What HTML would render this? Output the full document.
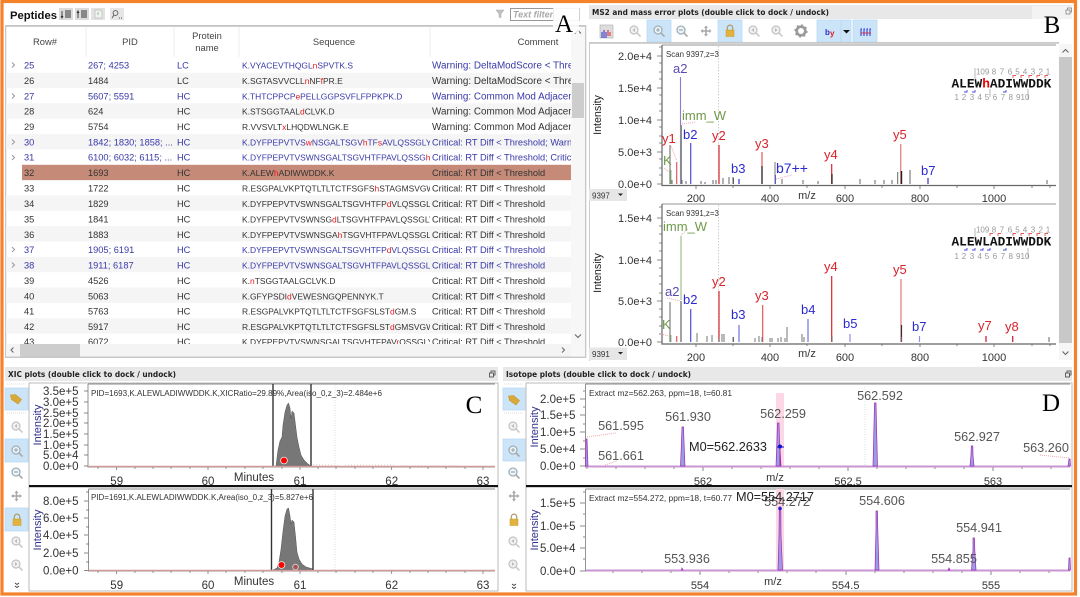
<!DOCTYPE html>
<html><head><meta charset="utf-8">
<style>
html,body{margin:0;padding:0;background:#fff;width:1080px;height:597px;overflow:hidden}
svg{display:block}
text{font-family:"Liberation Sans",sans-serif;white-space:pre}
.c{font-size:9.25px;fill:#333}
.w{font-size:9.9px}
.s{font-size:8.45px;fill:#333}
.b{fill:#3838a8}
.r{fill:#e8191c}
.h{font-size:9.4px;fill:#444;text-anchor:middle}
.t{font-family:"DejaVu Sans",sans-serif;font-size:8px;font-weight:bold;fill:#222}
.yl{font-size:11px;fill:#333;text-anchor:end}
.yc{font-size:11.5px;fill:#333;text-anchor:end}
.xl{font-size:11px;fill:#333;text-anchor:middle}
.xc{font-size:11.5px;fill:#333;text-anchor:middle}
.li{font-size:13px}
.lr{fill:#d8232a}.lb{fill:#2a2ad0}.lg{fill:#6f9a4a}.lp{fill:#5a4ab0}
.iso{font-size:12.7px;fill:#555;text-anchor:middle}
.sm{font-size:7.9px;fill:#333}
.n{font-size:8px;fill:#999}
.let{font-family:"Liberation Serif",serif;font-size:25px;fill:#000;text-anchor:middle}
.seq{font-family:"Liberation Mono",monospace;font-size:12.8px;font-weight:bold;fill:#111}
.btn{fill:#cce4f7;stroke:#b4d8f5;stroke-width:.7}
.pk{fill:#9b9ce6;stroke:#a02ab0;stroke-width:.7}
</style></head><body>
<svg width="1080" height="597" viewBox="0 0 1080 597" xmlns="http://www.w3.org/2000/svg">
<defs>
<clipPath id="cs"><rect x="240" y="57" width="190" height="287"/></clipPath>
<clipPath id="cc"><rect x="431" y="57" width="140" height="287"/></clipPath>
<clipPath id="ct"><rect x="6" y="57" width="565" height="287"/></clipPath>
<g id="zoom"><circle cx="-1" cy="-1" r="4" fill="#eef3f6" stroke="#9fb0bb" stroke-width="1.3"/><path d="M2 2l3.5 3.5" stroke="#aaa" stroke-width="1.6"/></g>
<g id="zin"><use href="#zoom"/><path d="M-3-1h4M-1-3v4" stroke="#7d929f" stroke-width=".8"/></g>
<g id="zout"><use href="#zoom"/><path d="M-3-1h4" stroke="#7d929f" stroke-width=".9"/></g>
<g id="zar"><circle cx="-1" cy="-1" r="4" fill="#f1f1f1" stroke="#c2c2c2" stroke-width="1.2"/><path d="M2 2l3.5 3.5" stroke="#ccc" stroke-width="1.6"/><path d="M-2.5-1l2.5-2v4z" fill="#bbb"/></g>
<g id="zar2"><circle cx="-1" cy="-1" r="4" fill="#f1f1f1" stroke="#c2c2c2" stroke-width="1.2"/><path d="M2 2l3.5 3.5" stroke="#ccc" stroke-width="1.6"/><path d="M.5-1l-2.5-2v4z" fill="#bbb"/></g>
<g id="move"><path d="M0-5.5l2 2.5h-1.2v2.2h2.2V-2L5.5 0 3 2V.8H.8V3H2L0 5.5-2 3h1.2V.8H-3V2L-5.5 0-3-2v1.2h2.2V-3H-2z" fill="#a8a8a8"/></g>
<g id="lock"><path d="M-2.7-1v-2.2a2.7 2.7 0 015.4 0V-1" fill="none" stroke="#a99a70" stroke-width="1.2"/><rect x="-4" y="-1" width="8" height="6.5" fill="#e2b23c" stroke="#c79b2a" stroke-width=".5"/></g>
<g id="tag"><path d="M-5.5-4l5-.5 6 5-3.500 4.500-6.500-4.500z" fill="#d9a93a" stroke="#c4952a" stroke-width=".6"/></g>
<g id="arrup"><path d="M-3 1.500L0-1.500l3 3" fill="none" stroke="#666" stroke-width="1.1"/></g>
<g id="arrdn"><path d="M-3-1.500L0 1.500l3-3" fill="none" stroke="#666" stroke-width="1.1"/></g>
</defs>

<rect width="1080" height="597" fill="#fff"/>

<!-- PEPTIDES PANEL -->
<text x="10" y="19" textLength="47" lengthAdjust="spacingAndGlyphs" style="font-size:11px;font-weight:bold;fill:#111">Peptides</text>
<rect x="59" y="8" width="14" height="12" fill="#dcdcdc"/><path d="M62 11v7M61 16l1 2 1-2M65 11h6M65 13h6M65 15h6M65 17h6" stroke="#333" stroke-width=".9" fill="none"/>
<rect x="75" y="8" width="14" height="12" fill="#dcdcdc"/><path d="M78 11v7M77 13l1-2 1 2M81 11h6M81 13h6M81 15h6M81 17h6" stroke="#333" stroke-width=".9" fill="none"/>
<rect x="91" y="8" width="14" height="12" fill="#e2e2e2"/><path d="M95 10h6l1 2v6h-7z" fill="#f2f2f2" stroke="#bbb" stroke-width=".7"/><path d="M98 12v3" stroke="#9c9" stroke-width="1.2"/>
<rect x="110" y="8" width="14" height="12" fill="#e6e6e6"/><circle cx="115.500" cy="13" r="2.400" fill="none" stroke="#555" stroke-width=".9"/><path d="M114 15l-2 3M119 18h1M121 18h1" stroke="#555" stroke-width=".9"/>
<path d="M496 10h8l-3 4v4l-2-1v-3z" fill="#c2c2c2" stroke="#aaa" stroke-width=".5"/>
<rect x="510.500" y="8.500" width="69" height="12" fill="#fff" stroke="#d0d0d0"/>
<rect x="510.500" y="8.500" width="43" height="12" fill="none" stroke="#999"/>
<text x="513" y="17.500" style="font-size:9px;font-style:italic;font-weight:bold;fill:#a8a8a8">Text filter</text>

<rect x="5" y="25" width="581" height="1.800" fill="#c4c4c4"/>
<rect x="5" y="25" width="1.300" height="333" fill="#c8c8c8"/>
<rect x="5" y="356.500" width="581" height="1.500" fill="#c8c8c8"/>
<rect x="585" y="25" width="1.300" height="333" fill="#c8c8c8"/>
<path d="M86 27v30M174 27v30M239 27v30M430 27v30" stroke="#eee"/>
<text class="h" x="45" y="45">Row#</text>
<text class="h" x="130" y="45">PID</text>
<text class="h" x="207" y="39">Protein</text>
<text class="h" x="207" y="51">name</text>
<text class="h" x="334" y="45">Sequence</text>
<text class="h" x="538" y="45">Comment</text>

<!-- row backgrounds -->
<g fill="#f5f5f5">
<rect x="6" y="72.650" width="565" height="15.350"/><rect x="6" y="103.350" width="565" height="15.350"/><rect x="6" y="134.050" width="565" height="15.350"/>
<rect x="6" y="195.450" width="565" height="15.350"/><rect x="6" y="226.150" width="565" height="15.350"/><rect x="6" y="256.850" width="565" height="15.350"/>
<rect x="6" y="287.550" width="565" height="15.350"/><rect x="6" y="318.250" width="565" height="15.350"/>
</g>
<rect x="22" y="164.800" width="549" height="15.350" fill="#c58a78"/>

<g clip-path="url(#ct)">
<text class="c b" x="24" y="68.500">25</text><text class="c b" x="88" y="68.500">267; 4253</text><text class="c b" x="177" y="68.500">LC</text>
<text class="c" x="24" y="84">26</text><text class="c" x="88" y="84">1484</text><text class="c" x="177" y="84">LC</text>
<text class="c b" x="24" y="99.500">27</text><text class="c b" x="88" y="99.500">5607; 5591</text><text class="c b" x="177" y="99.500">HC</text>
<text class="c" x="24" y="114.500">28</text><text class="c" x="88" y="114.500">624</text><text class="c" x="177" y="114.500">HC</text>
<text class="c" x="24" y="130">29</text><text class="c" x="88" y="130">5754</text><text class="c" x="177" y="130">HC</text>
<text class="c b" x="24" y="145.500">30</text><text class="c b" x="88" y="145.500">1842; 1830; 1858; ...</text><text class="c b" x="177" y="145.500">HC</text>
<text class="c b" x="24" y="160.500">31</text><text class="c b" x="88" y="160.500">6100; 6032; 6115; ...</text><text class="c b" x="177" y="160.500">HC</text>
<text class="c" x="24" y="176">32</text><text class="c" x="88" y="176">1693</text><text class="c" x="177" y="176">HC</text>
<text class="c" x="24" y="191.500">33</text><text class="c" x="88" y="191.500">1722</text><text class="c" x="177" y="191.500">HC</text>
<text class="c" x="24" y="207">34</text><text class="c" x="88" y="207">1829</text><text class="c" x="177" y="207">HC</text>
<text class="c" x="24" y="222.500">35</text><text class="c" x="88" y="222.500">1841</text><text class="c" x="177" y="222.500">HC</text>
<text class="c" x="24" y="238">36</text><text class="c" x="88" y="238">1883</text><text class="c" x="177" y="238">HC</text>
<text class="c b" x="24" y="253">37</text><text class="c b" x="88" y="253">1905; 6191</text><text class="c b" x="177" y="253">HC</text>
<text class="c b" x="24" y="268.500">38</text><text class="c b" x="88" y="268.500">1911; 6187</text><text class="c b" x="177" y="268.500">HC</text>
<text class="c" x="24" y="284">39</text><text class="c" x="88" y="284">4526</text><text class="c" x="177" y="284">HC</text>
<text class="c" x="24" y="299.500">40</text><text class="c" x="88" y="299.500">5063</text><text class="c" x="177" y="299.500">HC</text>
<text class="c" x="24" y="314.500">41</text><text class="c" x="88" y="314.500">5763</text><text class="c" x="177" y="314.500">HC</text>
<text class="c" x="24" y="330">42</text><text class="c" x="88" y="330">5917</text><text class="c" x="177" y="330">HC</text>
<text class="c" x="24" y="345">43</text><text class="c" x="88" y="345">6072</text><text class="c" x="177" y="345">HC</text>
<g clip-path="url(#cs)">
<text class="s b" x="242" y="68.500">K.VYACEVTHQGL<tspan class="r">n</tspan>SPVTK.S</text>
<text class="s" x="242" y="84">K.SGTASVVCLL<tspan class="r">n</tspan>NF<tspan class="r">f</tspan>PR.E</text>
<text class="s b" x="242" y="99.500">K.THTCPPCP<tspan class="r">e</tspan>PELLGGPSVFLFPPKPK.D</text>
<text class="s" x="242" y="114.500">K.STSGGTAAL<tspan class="r">d</tspan>CLVK.D</text>
<text class="s" x="242" y="130">R.VVSVLT<tspan class="r">x</tspan>LHQDWLNGK.E</text>
<text class="s b" x="242" y="145.500">K.DYFPEPVTVS<tspan class="r">w</tspan>NSGALTSGV<tspan class="r">h</tspan>TF<tspan class="r">s</tspan>AVLQSSGLY</text>
<text class="s b" x="242" y="160.500">K.DYFPEPVTVSWNSGALTSGVHTFPAVLQSSG<tspan class="r">h</tspan></text>
<text class="s" x="242" y="176">K.ALEW<tspan class="r">h</tspan>ADIWWDDK.K</text>
<text class="s" x="242" y="191.500">R.ESGPALVKPTQTLTLTCTFSGFS<tspan class="r">h</tspan>STAGMSVGW</text>
<text class="s" x="242" y="207">K.DYFPEPVTVSWNSGALTSGVHTFP<tspan class="r">d</tspan>VLQSSGL</text>
<text class="s" x="242" y="222.500">K.DYFPEPVTVSWNSG<tspan class="r">d</tspan>LTSGVHTFPAVLQSSGLY</text>
<text class="s" x="242" y="238">K.DYFPEPVTVSWNSGA<tspan class="r">h</tspan>TSGVHTFPAVLQSSGL</text>
<text class="s b" x="242" y="253">K.DYFPEPVTVSWNSGALTSGVHTFP<tspan class="r">d</tspan>VLQSSGL</text>
<text class="s b" x="242" y="268.500">K.DYFPEPVTVSWNSGALTSGVHTFPAVLQSSGLY</text>
<text class="s" x="242" y="284">K.<tspan class="r">n</tspan>TSGGTAALGCLVK.D</text>
<text class="s" x="242" y="299.500">K.GFYPSDI<tspan class="r">d</tspan>VEWESNGQPENNYK.T</text>
<text class="s" x="242" y="314.500">R.ESGPALVKPTQTLTLTCTFSGFSLST<tspan class="r">d</tspan>GM.S</text>
<text class="s" x="242" y="330">R.ESGPALVKPTQTLTLTCTFSGFSLST<tspan class="r">d</tspan>GMSVGW</text>
<text class="s" x="242" y="345">K.DYFPEPVTVSWNSGALTSGVHTFPAV<tspan class="r">r</tspan>QSSGLY</text>
</g>
<g clip-path="url(#cc)">
<text class="c b w" x="432" y="68.500">Warning: DeltaModScore &lt; Threshold</text>
<text class="c w" x="432" y="84">Warning: DeltaModScore &lt; Threshold</text>
<text class="c b w" x="432" y="99.500">Warning: Common Mod Adjacent</text>
<text class="c w" x="432" y="114.500">Warning: Common Mod Adjacent</text>
<text class="c w" x="432" y="130">Warning: Common Mod Adjacent</text>
<text class="c b" x="432" y="145.500">Critical: RT Diff &lt; Threshold; Warning</text>
<text class="c b" x="432" y="160.500">Critical: RT Diff &lt; Threshold; Critical</text>
<text class="c" x="432" y="176">Critical: RT Diff &lt; Threshold</text>
<text class="c" x="432" y="191.500">Critical: RT Diff &lt; Threshold</text>
<text class="c" x="432" y="207">Critical: RT Diff &lt; Threshold</text>
<text class="c" x="432" y="222.500">Critical: RT Diff &lt; Threshold</text>
<text class="c" x="432" y="238">Critical: RT Diff &lt; Threshold</text>
<text class="c b" x="432" y="253">Critical: RT Diff &lt; Threshold</text>
<text class="c b" x="432" y="268.500">Critical: RT Diff &lt; Threshold</text>
<text class="c" x="432" y="284">Critical: RT Diff &lt; Threshold</text>
<text class="c" x="432" y="299.500">Critical: RT Diff &lt; Threshold</text>
<text class="c" x="432" y="314.500">Critical: RT Diff &lt; Threshold</text>
<text class="c" x="432" y="330">Critical: RT Diff &lt; Threshold</text>
<text class="c" x="432" y="345">Critical: RT Diff &lt; Threshold</text>
</g>
</g>
<!-- expanders -->
<path d="M12 62.500l2.500 2.500-2.500 2.500M12 93.500l2.500 2.500-2.500 2.500M12 139.500l2.500 2.500-2.500 2.500M12 155l2.500 2.500-2.500 2.500M12 247l2.500 2.500-2.500 2.500M12 262.500l2.500 2.500-2.500 2.500" fill="none" stroke="#999" stroke-width="1"/>
<!-- table scrollbars -->
<rect x="571" y="27" width="14" height="329" fill="#f7f7f7"/>
<rect x="572" y="83" width="12" height="35" fill="#cdcdcd"/>
<use href="#arrup" x="578" y="32"/>
<use href="#arrdn" x="578" y="336"/>
<rect x="6" y="344" width="565" height="12.500" fill="#f4f4f4"/>
<rect x="20" y="344" width="60" height="12.500" fill="#cdcdcd"/>
<path d="M13.500 347.500l-2.500 2.500 2.500 2.500M562 347.500l2.500 2.500-2.500 2.500" fill="none" stroke="#666"/>

<rect x="553" y="7" width="26" height="26" fill="#fff" opacity=".8"/>
<text class="let" x="564" y="32">A</text>

<!-- MS2 PANEL -->
<rect x="589" y="5" width="483" height="14" fill="#e8e8e8"/>
<rect x="1032" y="6" width="40" height="13" fill="#f3f3f3"/>
<text class="t" x="592" y="15" textLength="237" lengthAdjust="spacingAndGlyphs">MS2 and mass error plots (double click to dock / undock)</text>
<rect x="1067.500" y="8" width="4" height="4" fill="none" stroke="#888" stroke-width=".8"/><rect x="1066" y="10" width="4" height="4" fill="#f3f3f3" stroke="#888" stroke-width=".8"/>
<rect x="647" y="20" width="24" height="22" class="btn"/>
<rect x="718" y="20" width="24" height="22" class="btn"/>
<rect x="817" y="20" width="24" height="22" class="btn"/>
<rect x="841" y="20" width="10" height="22" class="btn"/>
<rect x="853" y="20" width="24" height="22" class="btn"/>
<rect x="600" y="25" width="13" height="13" fill="#ddd" stroke="#aaa" stroke-width=".6"/>
<path d="M602 38v-6M604 38v-8M606 38v-6" stroke="#2a2ad0" stroke-width="1"/><path d="M608 36v-6M610 36v-4" stroke="#e02020" stroke-width="1"/>
<use href="#zar" x="635" y="31"/>
<use href="#zin" x="659" y="31"/>
<use href="#zout" x="682" y="31"/>
<use href="#move" x="706" y="31"/>
<use href="#lock" x="730" y="31"/>
<use href="#zar" x="754" y="31"/>
<use href="#zar2" x="777" y="31"/>
<circle cx="801" cy="31" r="4.300" fill="none" stroke="#9a9a9a" stroke-width="2.600"/>
<circle cx="801" cy="31" r="6" fill="none" stroke="#9a9a9a" stroke-width="1.300" stroke-dasharray="2 2.700"/>
<text x="825" y="35" style="font-size:8px;font-weight:bold;fill:#2a2ad0">b</text><text x="830" y="36" style="font-size:8px;font-weight:bold;fill:#e02020">y</text>
<path d="M843 30h7l-3.500 3.500z" fill="#111"/>
<path d="M861 36v-7h1M864 36v-7h1M867 36v-7h1M870 36v-7h1" fill="none" stroke="#3030d0" stroke-width="1"/><path d="M861 33h10" stroke="#e02020" stroke-width=".8"/>
<!-- plot frame -->
<rect x="589" y="42" width="470" height="1.800" fill="#c8c8c8"/>
<rect x="589" y="42" width="1" height="319" fill="#ccc"/>
<rect x="1059" y="44" width="13" height="316" fill="#f6f6f6"/>
<rect x="1059" y="57" width="13" height="286" fill="#c8c8c8"/>
<use href="#arrup" x="1065.500" y="51"/>
<use href="#arrdn" x="1065.500" y="353"/>

<!-- B1 -->
<path d="M662 45H1056" stroke="#aaa" stroke-width="1.200"/>
<path d="M662 45V185.500H1056" fill="none" stroke="#666" stroke-width="1.200"/>
<path d="M718.500 46V184" stroke="#bbb" stroke-width=".7" stroke-dasharray="1.500 1.500"/>
<path d="M657 56h5M657 88h5M657 120h5M657 152h5M657 184h5M659 47h3M659 63h3M659 72h3M659 79h3M659 95h3M659 104h3M659 111h3M659 127h3M659 136h3M659 143h3M659 159h3M659 168h3M659 175h3" stroke="#666" stroke-width=".7"/>
<path d="M696 186v3M733 186v2M770 186v3M807 186v2M845 186v3M882 186v2M920 186v3M957 186v2M994 186v3M1032 186v2M1050 186v2" stroke="#666" stroke-width=".8"/>
<text class="yl" x="652" y="60">2.0e+4</text><text class="yl" x="652" y="92">1.5e+4</text><text class="yl" x="652" y="124">1.0e+4</text><text class="yl" x="652" y="156">5.0e+3</text><text class="yl" x="652" y="188">0.0e+0</text>
<text transform="translate(601,115) rotate(-90)" style="font-size:10.7px;fill:#222;text-anchor:middle">Intensity</text>
<text class="xl" x="696" y="202">200</text><text class="xl" x="770" y="202">400</text><text class="xl" x="845" y="202">600</text><text class="xl" x="920" y="202">800</text><text class="xl" x="994" y="202">1000</text>
<text class="xl" x="807" y="199">m/z</text>
<rect x="589" y="189" width="38" height="12" fill="#e6e6e6"/><text x="592" y="198.500" style="font-size:8px;fill:#333">9397</text><path d="M618 193.500h5l-2.500 2.500z" fill="#222"/>
<g fill="none" stroke-width="1">
<path d="M680.500 77V184" stroke="#8a7fcf" stroke-width="1.100"/>
<path d="M681.500 125V184" stroke="#7f9a5f" stroke-width="1"/>
<path d="M670 145V184" stroke="#666"/><path d="M671 170V184" stroke="#9fc28a"/>
<path d="M676.700 162V184" stroke="#e0585c" stroke-width="1.200"/>
<path d="M690.700 143V184" stroke="#5a5ad8" stroke-width="1.300"/>
<path d="M719 145V184" stroke="#d8232a" stroke-width="1.200"/>
<path d="M762 152V184" stroke="#e0585c" stroke-width="1.200"/><path d="M762 166V184" stroke="#222" stroke-width="1.200"/>
<path d="M739 179V184" stroke="#5a5ad8" stroke-width="1.500"/>
<path d="M775 162V184" stroke="#777"/><path d="M775.500 175V184" stroke="#5a5ad8"/>
<path d="M831.700 164V184" stroke="#d8232a" stroke-width="1.200"/><path d="M832 174V184" stroke="#222" stroke-width="1.200"/>
<path d="M900.700 144V184" stroke="#e78a8d" stroke-width="1.400"/><path d="M901.500 171V184" stroke="#222" stroke-width="1.400"/>
<path d="M897.700 172V184M910 170V184" stroke="#666"/>
<path d="M928 178V184" stroke="#3030c8" stroke-width="1.200"/>
<path d="M672 180V184M682 180V184M686 181V184M701 181V184M705 182V184M713 180V184M716 180V184M723 178V184M729 177V184M733 177V184M733.500 178V184M782 179V184M803 180V184M818 181V184M860 179V184M875 180V184M884 180V184M892 180V184M1047 180V184" stroke="#555" stroke-width=".9"/>
<path d="M671 146L677 161M664 168L669 172M682 124L696 122M776 179L792 175" stroke="#eeaaaa" stroke-dasharray="1 1"/>
</g>
<text class="li lp" x="673" y="73">a2</text>
<text class="li lg" x="682" y="120">imm_W</text>
<text class="li lr" x="662" y="143">y1</text>
<text class="li lb" x="683" y="139">b2</text>
<text class="li lr" x="712" y="140">y2</text>
<text class="li lr" x="755" y="148">y3</text>
<text class="li lb" x="731" y="173">b3</text>
<text class="li lb" x="776" y="173" style="font-size:14px">b7++</text>
<text class="li lr" x="824" y="159">y4</text>
<text class="li lr" x="893" y="139">y5</text>
<text class="li lb" x="921" y="175">b7</text>
<text class="li lg" x="663" y="165">K</text>
<text class="sm" x="666" y="57">Scan 9397,z=3</text>
<!-- fragment map 1 -->
<text class="n" x="976 980.4 984.9 991.8 999.8 1007.8 1015.3 1022.8 1030.8 1038.5 1045.8" y="74.500">10987654321</text>
<text class="seq" x="951.500" y="87.500">ALEW<tspan fill="#e00">h</tspan>ADIWWDDK</text>
<text class="n" x="954.5 961.8 969.8 977.5 984.8 992.8 1000.8 1008.5 1016 1020.5 1025" y="100">12345678910</text>
<path d="M1013 78v-2.500h3M1021 78v-2.500h3M1029 78v-2.500h3M1037 78v-2.500h3M1045 78v-2.500h3" fill="none" stroke="#e55" stroke-width=".9"/>
<path d="M967 90v2h-3M975 90v2h-3M1006 90v2h-3" fill="none" stroke="#44d" stroke-width=".9"/>
<path d="M975 68v12M990 89v8M1028 89v11" stroke="#999" stroke-width=".7"/>

<!-- B2 -->
<path d="M662 204H1056" stroke="#aaa" stroke-width="1.200"/>
<path d="M662 204V344H1056" fill="none" stroke="#666" stroke-width="1.200"/>
<path d="M718.500 205V342" stroke="#bbb" stroke-width=".7" stroke-dasharray="1.500 1.500"/>
<path d="M657 218h5M657 260h5M657 301h5M657 342h5M659 207h3M659 226h3M659 234h3M659 243h3M659 251h3M659 268h3M659 276h3M659 284h3M659 293h3M659 309h3M659 317h3M659 326h3M659 334h3" stroke="#666" stroke-width=".7"/>
<path d="M696 344v3M733 344v2M770 344v3M807 344v2M845 344v3M882 344v2M920 344v3M957 344v2M994 344v3M1032 344v2M1050 344v2" stroke="#666" stroke-width=".8"/>
<text class="yl" x="652" y="222">1.5e+4</text><text class="yl" x="652" y="264">1.0e+4</text><text class="yl" x="652" y="305">5.0e+3</text><text class="yl" x="652" y="346">0.0e+0</text>
<text transform="translate(601,273) rotate(-90)" style="font-size:10.7px;fill:#222;text-anchor:middle">Intensity</text>
<text class="xl" x="696" y="361">200</text><text class="xl" x="770" y="361">400</text><text class="xl" x="845" y="361">600</text><text class="xl" x="920" y="361">800</text><text class="xl" x="994" y="361">1000</text>
<text class="xl" x="807" y="357">m/z</text>
<rect x="589" y="347.500" width="38" height="12.500" fill="#e6e6e6"/><text x="592" y="357" style="font-size:8px;fill:#333">9391</text><path d="M618 352h5l-2.500 2.500z" fill="#222"/>
<g fill="none" stroke-width="1">
<path d="M681 236V300" stroke="#a3bd88" stroke-width="1.200"/><path d="M681 301V342" stroke="#444" stroke-width="1"/>
<path d="M670 302V342" stroke="#666"/>
<path d="M671 335V342" stroke="#9fc28a"/>
<path d="M676.700 336V342" stroke="#e0585c" stroke-width="1.200"/>
<path d="M690.700 309V342" stroke="#5a5ad8" stroke-width="1.300"/>
<path d="M719 291V342" stroke="#d8232a" stroke-width="1.200"/>
<path d="M739 325V342" stroke="#7272dd" stroke-width="1.200"/>
<path d="M762.700 305V342" stroke="#e0585c" stroke-width="1.200"/>
<path d="M808 319V342" stroke="#5a5ad8" stroke-width="1"/>
<path d="M831.700 276V342" stroke="#d8232a" stroke-width="1.200"/>
<path d="M850 334V342" stroke="#9090e6" stroke-width="1.200"/>
<path d="M901 279V342" stroke="#e78a8d" stroke-width="1.400"/><path d="M901.500 325V342" stroke="#333" stroke-width="1.200"/>
<path d="M919.500 336V342" stroke="#9090e6" stroke-width="1.200"/>
<path d="M986 336V342" stroke="#c24" stroke-width="1.300"/>
<path d="M1012.700 336V342" stroke="#c24" stroke-width="1.300"/>
<path d="M1049 337V342" stroke="#666"/>
<path d="M697 333V342M707 336V342M712 335V342M722 334V342M724 334V342M733 337V342M733.500 337V342M755 338V342M759 336V342M770 338V342M772 338V342M778 338V342M781 337V342M785 338V342M787 327V342M802 334V342M804 337V342M832 336V342M901.500 337V342M762 337V342M719 338V342" stroke="#666" stroke-width=".9"/>
<path d="M667 298L680 301M661 334L669 336M681 235L688 229" stroke="#eeaaaa" stroke-dasharray="1 1"/>
</g>
<text class="li lg" x="663" y="231">imm_W</text>
<text class="li lp" x="665" y="296">a2</text>
<text class="li lb" x="683" y="304">b2</text>
<text class="li lr" x="712" y="286">y2</text>
<text class="li lr" x="755" y="300">y3</text>
<text class="li lb" x="731" y="319">b3</text>
<text class="li lb" x="801" y="314">b4</text>
<text class="li lr" x="824" y="271">y4</text>
<text class="li lb" x="843" y="328">b5</text>
<text class="li lr" x="893" y="274">y5</text>
<text class="li lb" x="912" y="331">b7</text>
<text class="li lr" x="978" y="330">y7</text>
<text class="li lr" x="1005" y="331">y8</text>
<text class="li lg" x="662" y="329">K</text>
<text class="sm" x="666" y="216">Scan 9391,z=3</text>
<text class="n" x="976 980.4 984.9 991.8 999.8 1007.8 1015.3 1022.8 1030.8 1038.5 1045.8" y="232.500">10987654321</text>
<text class="seq" x="951.500" y="245.500">ALEWLADIWWDDK</text>
<text class="n" x="954.5 961.8 969.8 977.5 984.8 992.8 1000.8 1008.5 1016 1020.5 1025" y="259">12345678910</text>
<path d="M990 236v-2.500h3M998 236v-2.500h3M1013 236v-2.500h3M1021 236v-2.500h3M1029 236v-2.500h3M1037 236v-2.500h3M1045 236v-2.500h3" fill="none" stroke="#e55" stroke-width=".9"/>
<path d="M967 248v2h-3M975 248v2h-3M983 248v2h-3M990 248v2h-3M1006 248v2h-3" fill="none" stroke="#44d" stroke-width=".9"/>
<path d="M975 228v10M1028 248v10" stroke="#999" stroke-width=".7"/>

<text class="let" x="1052" y="33">B</text>

<!-- XIC PANEL -->
<rect x="5" y="367" width="493" height="14" fill="#e8e8e8"/>
<text class="t" x="8" y="377" textLength="168" lengthAdjust="spacingAndGlyphs">XIC plots (double click to dock / undock)</text>
<rect x="491" y="371" width="4" height="4" fill="none" stroke="#444" stroke-width=".8"/><rect x="489.500" y="373" width="4" height="4" fill="#e8e8e8" stroke="#444" stroke-width=".8"/>
<rect x="5" y="388" width="23" height="22" class="btn"/>
<rect x="5" y="439" width="23" height="23" class="btn"/>
<rect x="5" y="508" width="23" height="23" class="btn"/>
<path d="M7 384h19M7 413h19" stroke="#ddd" stroke-dasharray="1 1"/>
<use href="#tag" x="16" y="399"/>
<use href="#zar" x="17" y="427"/>
<use href="#zin" x="17" y="451"/>
<use href="#zout" x="17" y="473"/>
<use href="#move" x="16.500" y="496"/>
<use href="#lock" x="17" y="520"/>
<use href="#zar" x="17" y="542"/>
<use href="#zar2" x="17" y="565"/>
<path d="M15 583l2 1.500 2-1.500M15 586l2 1.500 2-1.500" fill="none" stroke="#333" stroke-width=".8"/>
<rect x="29" y="383" width="469" height="208" fill="#fff" stroke="#bbb" stroke-width="1"/>
<rect x="29" y="485" width="469" height="2.200" fill="#111"/>

<!-- C1 -->
<path d="M88 384V467H495M88 384H495" fill="none" stroke="#888" stroke-width=".9"/>
<path d="M84 391h4M84 402h4M84 413h4M84 423h4M84 434h4M84 445h4M84 455h4M84 466h4" stroke="#666" stroke-width=".7"/>
<path d="M116.700 467v3M208 467v3M300 467v3M391.700 467v3M483 467v3M98 467v2M135 467v2M153 467v2M171 467v2M190 467v2M226 467v2M245 467v2M263 467v2M282 467v2M318 467v2M336 467v2M355 467v2M373 467v2M410 467v2M428 467v2M446 467v2M465 467v2" stroke="#666" stroke-width=".7"/>
<text class="yc" x="78.500" y="395">3.5e+5</text><text class="yc" x="78.500" y="406">3.0e+5</text><text class="yc" x="78.500" y="417">2.5e+5</text><text class="yc" x="78.500" y="427">2.0e+5</text><text class="yc" x="78.500" y="438">1.5e+5</text><text class="yc" x="78.500" y="449">1.0e+5</text><text class="yc" x="78.500" y="459">5.0e+4</text><text class="yc" x="78.500" y="470">0.0e+0</text>
<text transform="translate(41,425) rotate(-90)" style="font-size:11px;fill:#30308c;text-anchor:middle">Intensity</text>
<text class="xc" x="116.700" y="485">59</text><text class="xc" x="208" y="485">60</text><text class="xc" x="300" y="485">61</text><text class="xc" x="391.700" y="485">62</text><text class="xc" x="483" y="485">63</text>
<text class="xc" x="254" y="481">Minutes</text>
<path d="M335 385V466" stroke="#ccc" stroke-width=".7" stroke-dasharray="1 1.500"/>
<path d="M276 466L278 450 280 441 282 437 283 425 285 412 287 405 288.500 403 290 408 291 419 292 411 294 413 295.500 425 297 437 299 447 301 455 304 460 308 464 311 466Z" fill="#777" stroke="#555" stroke-width=".5"/>
<path d="M273 384V467M311 384V467" stroke="#333" stroke-width="1.400"/>
<circle cx="284" cy="460.500" r="3.400" fill="#f00" stroke="#eee" stroke-width=".8"/>
<path d="M89 466.500H495" stroke="#cf9a9a" stroke-width="1.600"/>
<path d="M313 464.500L340 465.500M345 465h50M400 465.500h60" stroke="#ecc" stroke-dasharray="1 2" fill="none"/>
<text class="sm" x="91" y="396" textLength="291" lengthAdjust="spacingAndGlyphs">PID=1693,K.ALEWLADIWWDDK.K,XICRatio=29.89%,Area(iso_0,z_3)=2.484e+6</text>
<text class="let" x="474" y="413">C</text>

<!-- C2 -->
<path d="M88.500 489V571H495M88.500 489H495" fill="none" stroke="#888" stroke-width=".9"/>
<path d="M84 501h4M84 518h4M84 535h4M84 553h4M84 570.500h4M86 492h3M86 510h3M86 527h3M86 544h3M86 562h3" stroke="#666" stroke-width=".7"/>
<path d="M116.700 571v3M208 571v3M300 571v3M391.700 571v3M483 571v3M98 571v2M135 571v2M153 571v2M171 571v2M190 571v2M226 571v2M245 571v2M263 571v2M282 571v2M318 571v2M336 571v2M355 571v2M373 571v2M410 571v2M428 571v2M446 571v2M465 571v2" stroke="#666" stroke-width=".7"/>
<text class="yc" x="78.500" y="505">8.0e+5</text><text class="yc" x="78.500" y="522">6.0e+5</text><text class="yc" x="78.500" y="539">4.0e+5</text><text class="yc" x="78.500" y="557">2.0e+5</text><text class="yc" x="78.500" y="574.500">0.0e+0</text>
<text transform="translate(41,530) rotate(-90)" style="font-size:11px;fill:#30308c;text-anchor:middle">Intensity</text>
<text class="xc" x="116.700" y="589">59</text><text class="xc" x="208" y="589">60</text><text class="xc" x="300" y="589">61</text><text class="xc" x="391.700" y="589">62</text><text class="xc" x="483" y="589">63</text>
<text class="xc" x="254" y="585">Minutes</text>
<path d="M335 489V570" stroke="#ccc" stroke-width=".7" stroke-dasharray="1 1.500"/>
<path d="M273 570L277 568 279 562 281 549 283 531 285 516 287 509 288.500 508 290 516 291 524 292 520 294 522 295.500 536 297 552 299 559 302 564 306 567 313 569V570Z" fill="#777" stroke="#555" stroke-width=".5"/>
<path d="M271.500 489V571M313 489V571" stroke="#333" stroke-width="1.400"/>
<circle cx="281.500" cy="565" r="3.400" fill="#f00" stroke="#eee" stroke-width=".8"/>
<circle cx="295.500" cy="567" r="2.800" fill="#a55" stroke="#ddd" stroke-width=".8"/>
<path d="M89 570.500H495" stroke="#cf9a9a" stroke-width="1.600"/>
<text class="sm" x="91" y="500" textLength="222" lengthAdjust="spacingAndGlyphs">PID=1691,K.ALEWLADIWWDDK.K,Area(iso_0,z_3)=5.827e+6</text>

<!-- ISOTOPE PANEL -->
<rect x="503" y="367" width="569" height="14" fill="#e8e8e8"/>
<text class="t" x="506" y="377" textLength="185" lengthAdjust="spacingAndGlyphs">Isotope plots (double click to dock / undock)</text>
<rect x="1067" y="371" width="4" height="4" fill="none" stroke="#444" stroke-width=".8"/><rect x="1065.500" y="373" width="4" height="4" fill="#e8e8e8" stroke="#444" stroke-width=".8"/>
<rect x="503" y="388" width="23" height="22" class="btn"/>
<rect x="503" y="439" width="23" height="22" class="btn"/>
<path d="M504 384h19M504 413h19" stroke="#ddd" stroke-dasharray="1 1"/>
<use href="#tag" x="514" y="400"/>
<use href="#zar" x="514" y="427"/>
<use href="#zin" x="514" y="451"/>
<use href="#zout" x="514" y="473"/>
<use href="#move" x="514" y="496"/>
<use href="#lock" x="514" y="520"/>
<use href="#zar" x="514" y="542"/>
<use href="#zar2" x="514" y="565"/>
<path d="M512 584l2 1.500 2-1.500M512 587l2 1.500 2-1.500" fill="none" stroke="#333" stroke-width=".8"/>
<rect x="526" y="383" width="546" height="208" fill="#fff" stroke="#bbb" stroke-width="1"/>
<rect x="526" y="485" width="546" height="2.200" fill="#111"/>

<!-- D1 -->
<path d="M585.500 384V467H1070M585.500 384H1070" fill="none" stroke="#888" stroke-width=".9"/>
<path d="M580 399h5M580 415h5M580 432h5M580 449h5M580 466h5M583 391h2M583 407h2M583 424h2M583 441h2M583 458h2" stroke="#666" stroke-width=".7"/>
<path d="M703 467v4M848 467v4M993 467v4M587 467v2M616 467v2M645 467v2M674 467v2M732 467v2M761 467v2M790 467v2M819 467v2M877 467v2M906 467v2M935 467v2M964 467v2M1022 467v2M1051 467v2" stroke="#666" stroke-width=".8"/>
<text class="yc" x="575.500" y="403">2.0e+5</text><text class="yc" x="575.500" y="419">1.5e+5</text><text class="yc" x="575.500" y="436">1.0e+5</text><text class="yc" x="575.500" y="453">5.0e+4</text><text class="yc" x="575.500" y="470">0.0e+0</text>
<text transform="translate(538,427) rotate(-90)" style="font-size:11px;fill:#30308c;text-anchor:middle">Intensity</text>
<text class="xl" x="703" y="485">562</text><text class="xl" x="848" y="485">562.5</text><text class="xl" x="993" y="485">563</text>
<text class="xl" x="775" y="481">m/z</text>
<rect x="776" y="393" width="8" height="73" fill="#fcd8e6"/>
<path d="M865 384V466" stroke="#ccc" stroke-width=".7" stroke-dasharray="1 1.500"/>
<path d="M586 466.500H1070" stroke="#c896d2" stroke-width="2"/>
<g class="pk">
<path d="M585.500 466L586 439H587L588 466Z"/>
<path d="M680.500 466L681.500 442 682 427H683.500L684 442 685 466Z"/>
<path d="M776 466L777 440 777.500 423H779L779.500 440 781 466Z"/>
<path d="M873 466L874 425 874.500 403H876L876.500 425 877.500 466Z"/>
<path d="M970 466L971 455 971.300 446H972.800L973 455 974 466Z"/>
<path d="M1068 466L1069 459H1070L1070.500 466Z"/>
</g>
<path d="M780 447V466" stroke="#a02ab0" stroke-width="1"/>
<path d="M587 437L616 433M605 465L617 461" stroke="#f0a8a8" stroke-dasharray="1 1" fill="none"/>
<path d="M1040 455L1069 458" stroke="#f0a8a8" stroke-dasharray="1 1" fill="none"/>
<path d="M777 447h7" stroke="#11c" stroke-width="1"/><circle cx="780" cy="446.500" r="2" fill="#11c"/>
<text class="sm" x="589" y="396" textLength="143" lengthAdjust="spacingAndGlyphs">Extract mz=562.263, ppm=18, t=60.81</text>
<text class="iso" x="621" y="430">561.595</text>
<text class="iso" x="621" y="460">561.661</text>
<text class="iso" x="688" y="421">561.930</text>
<text class="iso" x="783" y="418">562.259</text>
<text class="iso" x="880" y="400">562.592</text>
<text class="iso" x="977" y="441">562.927</text>
<text class="iso" x="1046" y="452">563.260</text>
<text x="689" y="451" style="font-size:12.7px;fill:#222">M0=562.2633</text>
<text class="let" x="1051" y="411">D</text>

<!-- D2 -->
<path d="M585.500 489V571H1070M585.500 489H1070" fill="none" stroke="#888" stroke-width=".9"/>
<path d="M580 503h5M580 526h5M580 548h5M580 571h5M583 492h2M583 514h2M583 537h2M583 559h2" stroke="#666" stroke-width=".7"/>
<path d="M700 571v4M846 571v4M991 571v4M613 571v2M642 571v2M671 571v2M729 571v2M758 571v2M787 571v2M816 571v2M875 571v2M904 571v2M933 571v2M962 571v2M1020 571v2M1049 571v2" stroke="#666" stroke-width=".8"/>
<text class="yc" x="575.500" y="507">1.5e+5</text><text class="yc" x="575.500" y="530">1.0e+5</text><text class="yc" x="575.500" y="552">5.0e+4</text><text class="yc" x="575.500" y="575">0.0e+0</text>
<text transform="translate(538,530) rotate(-90)" style="font-size:11px;fill:#30308c;text-anchor:middle">Intensity</text>
<text class="xl" x="700" y="589">554</text><text class="xl" x="845.700" y="589">554.5</text><text class="xl" x="991" y="589">555</text>
<text class="xl" x="773" y="585">m/z</text>
<rect x="776" y="489" width="8" height="81" fill="#fcd8e6"/>
<path d="M586 570.500H1070" stroke="#c896d2" stroke-width="2"/>
<g class="pk">
<path d="M778 570L779 535 779.300 507H780.800L781 535 782.500 570Z"/>
<path d="M875 570L876 530 876 511H877.500L877.800 530 879 570Z"/>
<path d="M971.500 570L973 550 973 538H974.500L974.800 550 976 570Z"/>
<path d="M1068.500 570L1069 558H1070L1070.500 570Z"/>
<path d="M681.500 570L682 568 683 570Z"/>
<path d="M948 570L949 568 950 570Z"/>
</g>
<circle cx="780" cy="508.500" r="1.800" fill="#22c"/>
<text class="sm" x="589" y="501" textLength="143" lengthAdjust="spacingAndGlyphs">Extract mz=554.272, ppm=18, t=60.77</text>
<text class="iso" x="787" y="506">554.272</text>
<text x="736" y="501" style="font-size:12.7px;fill:#222">M0=554.2717</text>
<text class="iso" x="687" y="563">553.936</text>
<text class="iso" x="882" y="505">554.606</text>
<text class="iso" x="979" y="532">554.941</text>
<text class="iso" x="954" y="563">554.855</text>

<!-- ORANGE FRAME -->
<rect x="2" y="1.500" width="1073.500" height="592.500" fill="none" stroke="#f5822a" stroke-width="3.200"/>
</svg>
</body></html>
